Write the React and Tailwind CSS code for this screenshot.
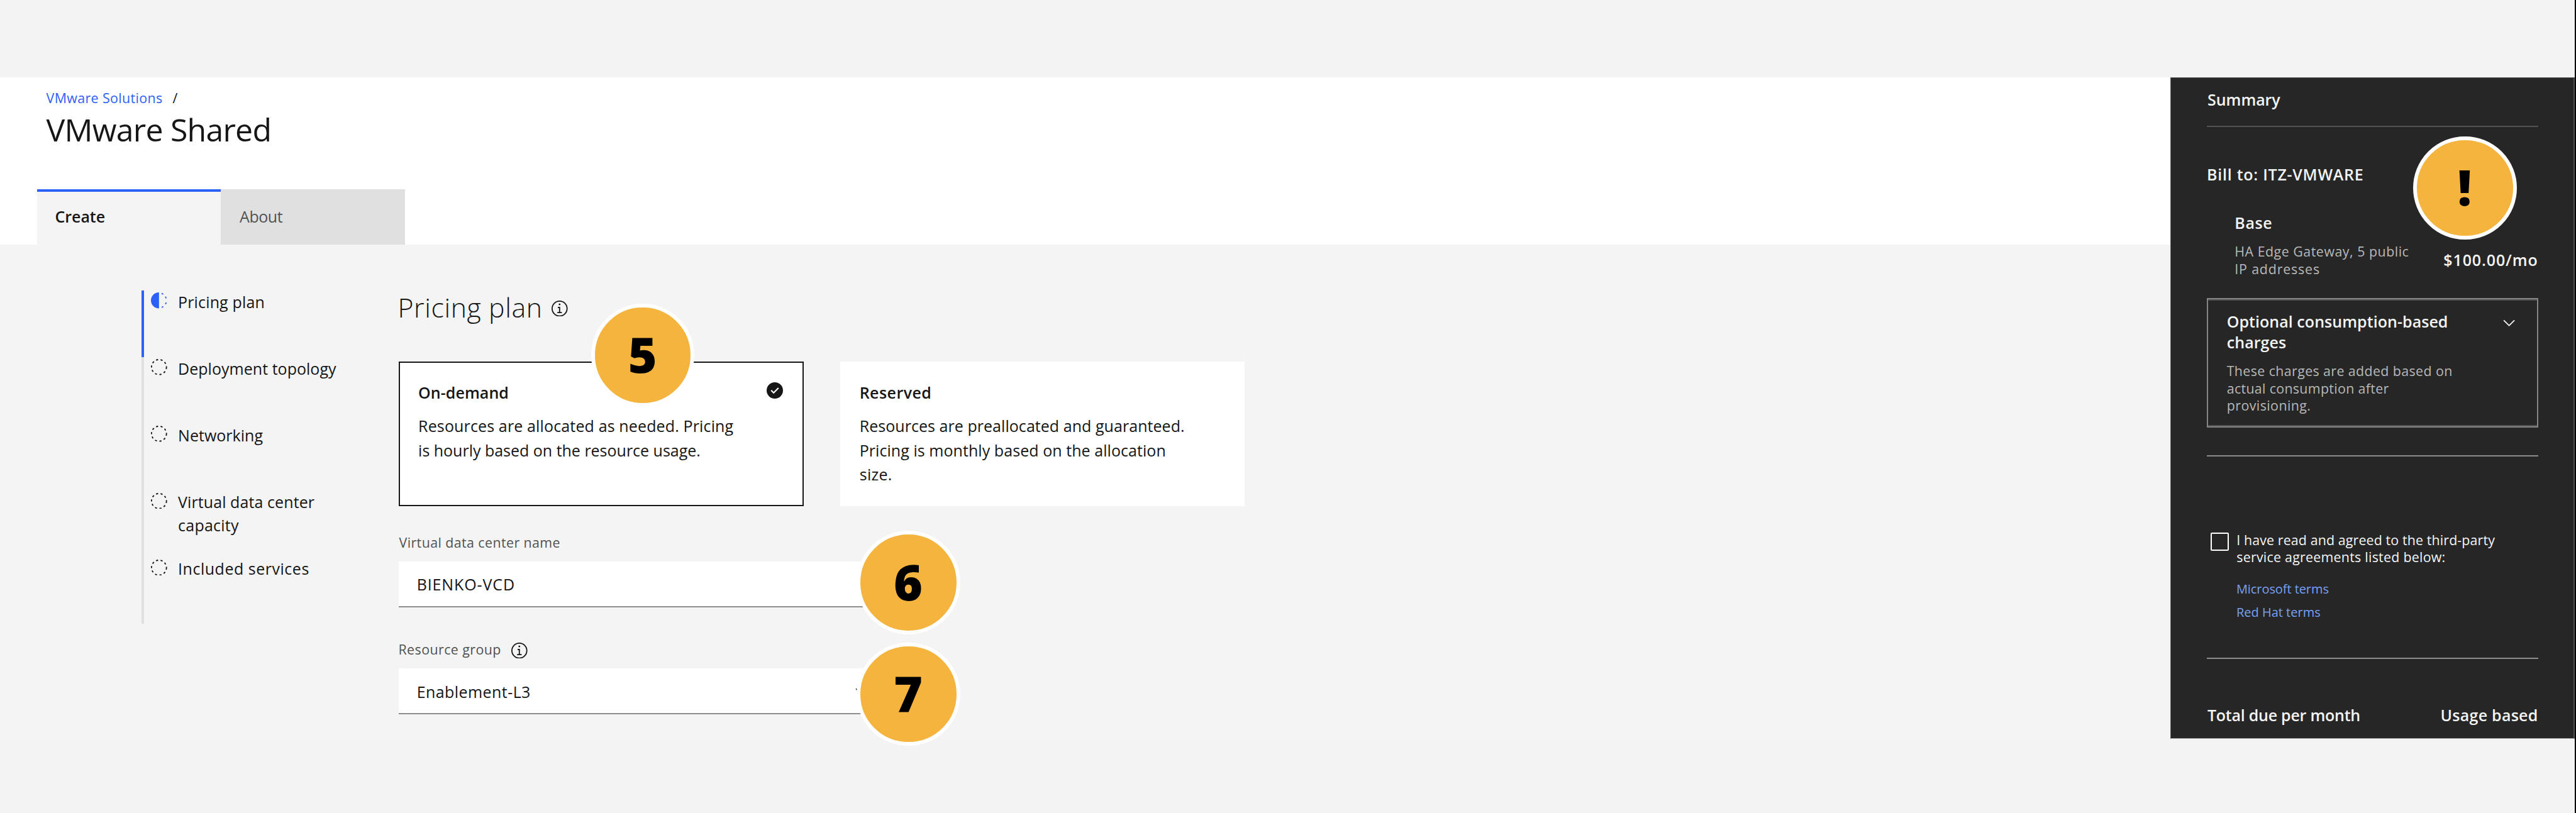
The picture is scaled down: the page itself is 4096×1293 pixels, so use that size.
function Lines({ lines, className }) {
  return (
    <div className={className}>
      {lines.map(([text, tracking]) => (
        <div key={text} className={"whitespace-nowrap " + tracking}>
          {text}
        </div>
      ))}
    </div>
  );
}

function InfoIcon({ className }) {
  return (
    <svg viewBox="1 1 14 14" className={"size-[25.6px] shrink-0 " + className}>
      <circle cx="8" cy="8" r="6.5" fill="none" stroke="currentColor" />
      <path d="M8.5 11V6.5h-2v1h1V11H6v1h4v-1z" fill="currentColor" />
      <circle cx="8" cy="4.35" r="0.8" fill="currentColor" />
    </svg>
  );
}

function CheckIcon({ className }) {
  return (
    <svg viewBox="1 1 14 14" className={"size-[26px] shrink-0 " + className}>
      <circle cx="8" cy="8" r="7" fill="#161616" />
      <path d="M7 10.8 4.5 8.3l.8-.8L7 9.2l3.7-3.7.8.8z" fill="#fff" />
    </svg>
  );
}

function Chevron({ className }) {
  return (
    <svg viewBox="0 0 16 16" className={"size-[29.26px] shrink-0 " + className}>
      <path d="M8 11 3 6l.7-.7L8 9.6l4.3-4.3.7.7z" fill="currentColor" />
    </svg>
  );
}

function StepIcon({ active }) {
  const cls = "ml-[11.9px] mt-[3.7px] size-[25.6px] shrink-0 ";
  if (active) {
    return (
      <svg viewBox="1 1 14 14" className={cls + "text-[#2b61f7]"}>
        <path d="M8 1A7 7 0 0 0 8 15Z" fill="currentColor" />
        <path
          d="M10.22 1.89A6.5 6.5 0 0 1 10.22 14.11"
          fill="none"
          stroke="currentColor"
          pathLength="140"
          strokeDasharray="15 24 15 32 15 24 15 50"
        />
      </svg>
    );
  }
  return (
    <svg viewBox="1 1 14 14" className={cls + "text-[#161616]"}>
      <circle
        cx="8"
        cy="8"
        r="6.5"
        fill="none"
        stroke="currentColor"
        pathLength="100"
        strokeDasharray="4.5 5.5"
      />
    </svg>
  );
}

function Badge({ label, className }) {
  return (
    <div
      className={
        "absolute z-10 flex size-[164.6px] items-center justify-center rounded-full border-[6px] border-white bg-[#f5b43e] pr-[1px] pb-[4px] text-[78.5px] leading-[106px] font-extrabold text-black " +
        className
      }
    >
      {label}
    </div>
  );
}

const steps = [
  [["Pricing plan", "tracking-[0.15px]"]],
  [["Deployment topology", "tracking-[0.03px]"]],
  [["Networking", "tracking-[0.03px]"]],
  [
    ["Virtual data center", "tracking-[0.09px]"],
    ["capacity", "tracking-[0.25px]"],
  ],
  [["Included services", "tracking-[0.52px]"]],
];

function Header() {
  return (
    <header className="flex h-[265.2px] flex-col bg-white">
      <div className="flex gap-[16px] pt-[18px] pl-[73.6px] text-[21.4px] leading-[30px]">
        <span className="tracking-[0.36px] text-[#2b61f7]">VMware Solutions</span>
        <span>/</span>
      </div>
      <h1 className="mt-[4.5px] pl-[73.6px] text-[50px] leading-[60px] tracking-[-0.78px]">
        VMware Shared
      </h1>
      <nav className="mt-auto flex h-[87.8px] pl-[58.5px] text-[25px] leading-[36px]">
        <div className="w-[292.6px] border-t-4 border-[#2b61f7] bg-[#f4f4f4] pt-[21.5px] pl-[29px] font-semibold tracking-[-0.05px]">
          Create
        </div>
        <div className="w-[292.6px] bg-[#e0e0e0] pt-[25.5px] pl-[30px] tracking-[-0.48px] text-[#525252]">
          About
        </div>
      </nav>
    </header>
  );
}

function Progress() {
  return (
    <ol className="ml-[224.9px] w-[409.6px] shrink-0">
      {steps.map((lines, i) => (
        <li key={i} className="flex h-[106.06px]">
          <div
            className={"h-full w-[3.66px] shrink-0 " + (i === 0 ? "bg-[#2b61f7]" : "bg-[#e0e0e0]")}
          />
          <StepIcon active={i === 0} />
          <Lines lines={lines} className="mt-[0.2px] ml-[17px] text-[25px] leading-[37.1px]" />
        </li>
      ))}
    </ol>
  );
}

function PlanForm() {
  return (
    <div>
      <div className="ml-[-2px] flex h-[54px] items-start">
        <h2 className="mt-[0.6px] w-[244.8px] text-[42.8px] leading-[54px] font-light tracking-[0.58px] whitespace-nowrap">
          Pricing plan
        </h2>
        <InfoIcon className="mt-[16px]" />
      </div>
      <div className="mt-[59.4px] flex gap-[57.9px]">
        <section className="relative h-[229.8px] w-[643.5px] border-2 border-[#161616] bg-white pt-[28.2px] pl-[28.6px]">
          <div className="flex justify-between pr-[31.2px]">
            <h3 className="text-[25px] leading-[38px] font-semibold tracking-[0.06px]">On-demand</h3>
            <CheckIcon className="mt-[2.6px]" />
          </div>
          <Lines
            className="mt-[15.2px] text-[25px] leading-[38.4px]"
            lines={[
              ["Resources are allocated as needed. Pricing", "tracking-[0.14px]"],
              ["is hourly based on the resource usage.", "tracking-[-0.01px]"],
            ]}
          />
          <Badge label="5" className="top-[-94.2px] left-[303.4px]" />
        </section>
        <section className="h-[229.8px] w-[643.5px] bg-white pt-[30.2px] pl-[30.8px]">
          <h3 className="text-[25px] leading-[38px] font-semibold tracking-[0.45px]">Reserved</h3>
          <Lines
            className="mt-[15.2px] text-[25px] leading-[38.4px]"
            lines={[
              ["Resources are preallocated and guaranteed.", "tracking-[0.05px]"],
              ["Pricing is monthly based on the allocation", "tracking-[0.06px]"],
              ["size.", "tracking-[0.3px]"],
            ]}
          />
        </section>
      </div>
      <div className="mt-[43.5px] text-[21.4px] leading-[30px] tracking-[0.41px] text-[#525252]">
        Virtual data center name
      </div>
      <div className="relative mt-[14.6px] h-[73.1px] w-[780px] border-b-2 border-[#8d8d8d] bg-white pt-[18px] pl-[28.2px] text-[25px] leading-[36px] tracking-[0.88px]">
        BIENKO-VCD
        <Badge label="6" className="top-[-48.5px] left-[727.8px] tracking-normal" />
      </div>
      <div className="mt-[52.4px] ml-[-1px] flex h-[30px] text-[21.4px] leading-[30px] tracking-[0.42px] text-[#525252]">
        <span className="w-[179.8px]">Resource group</span>
        <InfoIcon className="mt-[3.2px] text-[#161616]" />
      </div>
      <div className="relative mt-[14.5px] flex h-[73.1px] w-[780px] justify-between border-b-2 border-[#8d8d8d] bg-white pt-[18.6px] pr-[30px] pl-[28.2px] text-[25px] leading-[36px]">
        <span className="tracking-[0.43px]">Enablement-L3</span>
        <Chevron className="mt-[3.4px]" />
        <Badge label="7" className="top-[-41.1px] left-[727.8px]" />
      </div>
    </div>
  );
}

function Summary() {
  return (
    <aside className="relative flex w-[643.2px] shrink-0 flex-col border-t border-r-2 border-b border-l border-t-[#5a5e5c] border-r-[#525252] border-b-[#a8a8a8] border-l-[#5a5a5a] bg-[#262626] pr-[56.6px] pl-[57.1px] text-[#f4f4f4]">
      <h2 className="mt-[16.4px] ml-[1px] text-[25px] leading-[34px] font-semibold tracking-[-0.07px]">
        Summary
      </h2>
      <div className="mt-[25.4px] h-[2px] bg-[#525252]" />
      <div className="mt-[58.3px] text-[25px] leading-[34px] font-semibold tracking-[0.74px]">
        Bill to: ITZ-VMWARE
      </div>
      <div className="mt-[42.8px] ml-[44.2px] text-[25px] leading-[34px] font-semibold tracking-[0.6px]">
        Base
      </div>
      <div className="mt-[14.9px] ml-[44.2px] flex h-[54.4px] justify-between">
        <Lines
          className="text-[21.4px] leading-[27.4px] text-[#b8b8b8]"
          lines={[
            ["HA Edge Gateway, 5 public", "tracking-[0.5px]"],
            ["IP addresses", "tracking-[0.82px]"],
          ]}
        />
        <div className="mt-[9.9px] text-[25px] leading-[34px] font-semibold tracking-[0.88px]">
          $100.00/mo
        </div>
      </div>
      <div className="mt-[33px] h-[206.6px] border-2 border-[#858585]">
        <div className="flex h-full justify-between border-y-2 border-[#525252] pt-[17.6px] pr-[29px] pl-[29.6px]">
          <div>
            <Lines
              className="text-[25px] leading-[32.9px] font-semibold"
              lines={[
                ["Optional consumption-based", "tracking-[0.05px]"],
                ["charges", "tracking-[0.07px]"],
              ]}
            />
            <Lines
              className="mt-[15.3px] text-[21.4px] leading-[27.5px] text-[#b8b8b8]"
              lines={[
                ["These charges are added based on", "tracking-[0.38px]"],
                ["actual consumption after", "tracking-[0.32px]"],
                ["provisioning.", "tracking-[0.43px]"],
              ]}
            />
          </div>
          <Chevron className="mt-[4.2px]" />
        </div>
      </div>
      <div className="mt-[43.9px] h-[2px] bg-[#8d8d8d]" />
      <div className="mt-[118.9px] ml-[5.4px] flex">
        <div className="mt-[1.6px] size-[29.3px] shrink-0 rounded-[2px] border-2 border-white" />
        <Lines
          className="ml-[12.4px] text-[21.4px] leading-[27.5px]"
          lines={[
            ["I have read and agreed to the third-party", "tracking-[0.12px]"],
            ["service agreements listed below:", "tracking-[0.25px]"],
          ]}
        />
      </div>
      <Lines
        className="mt-[19.2px] ml-[46.8px] text-[20px] leading-[36.6px] text-[#78a1f5]"
        lines={[
          ["Microsoft terms", "tracking-[-0.07px]"],
          ["Red Hat terms", "tracking-[0px]"],
        ]}
      />
      <div className="mt-[53.6px] h-[2px] bg-[#8d8d8d]" />
      <div className="mt-[71.8px] flex justify-between text-[25px] leading-[34px] font-semibold">
        <span className="ml-[0.8px] tracking-[-0.24px]">Total due per month</span>
        <span className="tracking-[0.26px]">Usage based</span>
      </div>
      <Badge label="!" className="top-[92.3px] left-[385.2px]" />
    </aside>
  );
}

export default function App() {
  return (
    <div className="flex h-[1293px] w-[4096px] overflow-hidden bg-[#f3f3f3] font-['Open_Sans','Noto_Sans',sans-serif] text-[#161616]">
      <div className="flex grow flex-col">
        <div className="h-[123.4px] shrink-0" />
        <div className="flex h-[1051.5px]">
          <div className="flex grow flex-col">
            <Header />
            <main className="flex grow bg-[#f4f4f4] pt-[73.1px]">
              <Progress />
              <PlanForm />
            </main>
          </div>
          <Summary />
        </div>
      </div>
      <div className="w-[1.8px] shrink-0 bg-black" />
    </div>
  );
}
